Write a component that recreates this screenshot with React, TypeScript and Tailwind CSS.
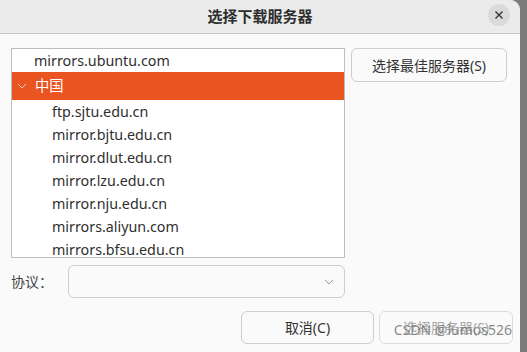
import { useState } from "react"

const MIRRORS = [
    "ftp.sjtu.edu.cn",
    "mirror.bjtu.edu.cn",
    "mirror.dlut.edu.cn",
    "mirror.lzu.edu.cn",
    "mirror.nju.edu.cn",
    "mirrors.aliyun.com",
    "mirrors.bfsu.edu.cn",
]

const FONT = "font-['Noto_Sans','Noto_Sans_CJK_SC',sans-serif]"

function Chevron({ className }: { className: string }) {
    return (
        <svg width="10" height="6" viewBox="0 0 10 6" className={className}>
            <path d="M1 1l4 4 4-4" fill="none" stroke="currentColor" strokeWidth="1" />
        </svg>
    )
}

function App() {
    const [selected] = useState("中国")

    return (
        <div className={`flex h-[352px] w-[527px] bg-[#7b7b7b] ${FONT}`}>
            <div className="flex w-[520px] flex-col overflow-hidden rounded-tr-[10px] bg-[#fafafa]">
                {/* header */}
                <div className="relative flex h-[34px] shrink-0 items-center justify-center border-b border-[#c4c4c4] bg-[#ebebeb]">
                    <span className="text-[15px] font-bold text-[#2e2e2e]">选择下载服务器</span>
                    <button className="absolute right-[10px] top-[4px] flex size-[22px] items-center justify-center rounded-full bg-[#dadada]">
                        <svg width="8" height="8" viewBox="0 0 8 8">
                            <path d="M0.5 0.5l7 7M7.5 0.5l-7 7" stroke="#333" strokeWidth="1.4" />
                        </svg>
                    </button>
                </div>

                <div className="flex flex-col pl-[11px] pt-[14px]">
                    <div className="flex items-start gap-[6px]">
                        <div className="h-[210px] w-[334px] overflow-hidden border border-[#bdbdbd] bg-white text-[14.3px] text-[#2f2f2f]">
                            <div className="flex h-[23px] items-center pl-[22px]">mirrors.ubuntu.com</div>
                            <div className="flex h-[28px] items-center bg-[#e95420] text-white">
                                <Chevron className="ml-[5px] mr-[8px] text-[#f6c9b6]" />
                                <span>{selected}</span>
                            </div>
                            {MIRRORS.map((m) => (
                                <div key={m} className="flex h-[23px] shrink-0 items-center pl-[40px]">
                                    {m}
                                </div>
                            ))}
                        </div>
                        <button className="flex h-[34px] w-[156px] items-center justify-center rounded-[6px] border border-[#cdcdcd] bg-[#fafafa] text-[14px] text-[#333]">
                            选择最佳服务器(S)
                        </button>
                    </div>

                    <div className="mt-[7px] flex items-center">
                        <span className="w-[57px] text-[14px] text-[#444]">协议：</span>
                        <div className="flex h-[33px] w-[277px] items-center justify-end rounded-[6px] border border-[#cdcdcd] bg-[#fafafa] pr-[10px]">
                            <Chevron className="text-[#9a9a9a]" />
                        </div>
                    </div>

                    <div className="relative mt-[13px] flex justify-end gap-[5px] pr-[7px]">
                        <button className="flex h-[33px] w-[133px] items-center justify-center rounded-[6px] border border-[#cdcdcd] bg-[#fafafa] text-[14px] text-[#333]">
                            取消(C)
                        </button>
                        <button className="flex h-[33px] w-[134px] items-center justify-center rounded-[6px] border border-[#dcdcdc] bg-[#fafafa] text-[14px] text-[#a8a8a8]">
                            选择服务器(S)
                        </button>
                        <span className="absolute right-[8px] top-[8px] text-[14px] text-[#7a7a7a]/90">CSDN @lumos526</span>
                    </div>
                </div>
            </div>
        </div>
    )
}

export default App
